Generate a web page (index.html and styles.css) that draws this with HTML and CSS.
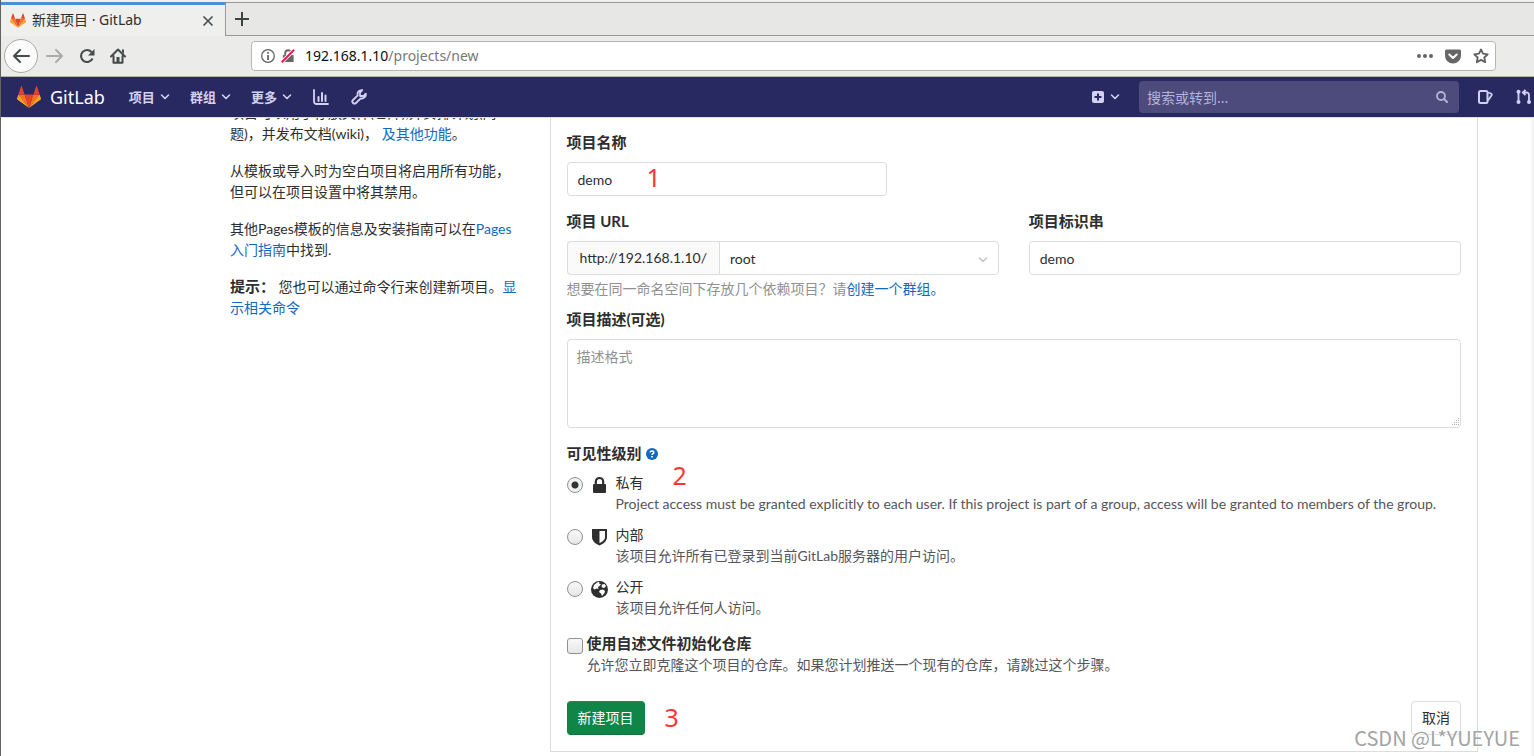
FILE: index.html
```
<!DOCTYPE html>
<html lang="zh-CN">
<head>
<meta charset="utf-8">
<title>新建项目 · GitLab</title>
<link rel="stylesheet" href="styles.css">
</head>
<body>
<svg class="defs" aria-hidden="true">
  <symbol id="tanuki" viewBox="0 0 24 22">
    <path fill="#e24329" d="M12 22 16.4 8.4H7.6z"/>
    <path fill="#fc6d26" d="M12 22 7.6 8.4H1.4zM12 22l4.4-13.6h6.2z"/>
    <path fill="#fca326" d="M1.4 8.4 0 12.5c-.1.4 0 .8.3 1L12 22zM22.6 8.4l1.4 4.1c.1.4 0 .8-.3 1L12 22z"/>
    <path fill="#e24329" d="M1.4 8.4h6.2L4.9.4c-.1-.5-.7-.5-.9 0zM22.6 8.4h-6.2L19.100.4c.1-.5.7-.5.9 0z"/>
  </symbol>
  <symbol id="chevron" viewBox="0 0 10 8">
    <path d="M1.500 2 5 5.500 8.500 2" fill="none" stroke="currentColor" stroke-width="1.600" stroke-linecap="round" stroke-linejoin="round"/>
  </symbol>
</svg>

<header class="chrome">
  <div class="tabs">
    <div class="tab">
      <svg class="favicon" viewBox="0 0 24 22"><use href="#tanuki"/></svg>
      <span class="tab-title">新建项目 · GitLab</span>
      <button class="plain" aria-label="关闭标签页"><svg width="12" height="12" viewBox="0 0 12 12"><path d="M1.500 1.500l9 9M10.500 1.500l-9 9" stroke="#4a4f50" stroke-width="1.700"/></svg></button>
    </div>
    <div class="tab-strip">
      <button class="plain" aria-label="新标签页"><svg width="14" height="14" viewBox="0 0 14 14"><path d="M7 0v14M0 7h14" stroke="#3e4344" stroke-width="2"/></svg></button>
    </div>
  </div>
  <div class="toolbar">
    <div class="nav-buttons">
      <button class="plain back" aria-label="后退"><svg width="18" height="16" viewBox="0 0 18 16"><path d="M8 2 2 8l6 6M2 8h15" fill="none" stroke="#454a4b" stroke-width="2" stroke-linecap="round" stroke-linejoin="round"/></svg></button>
      <button class="plain" aria-label="前进"><svg width="18" height="16" viewBox="0 0 18 16"><path d="M10 2l6 6-6 6M16 8H1" fill="none" stroke="#aaacab" stroke-width="2" stroke-linecap="round" stroke-linejoin="round"/></svg></button>
      <button class="plain" aria-label="刷新"><svg width="16" height="16" viewBox="0 0 16 16"><path d="M13.500 10.500A6 6 0 1 1 12.500 4" fill="none" stroke="#454a4b" stroke-width="2.100"/><path d="M15.500 1v6.500H9z" fill="#454a4b"/></svg></button>
      <button class="plain" aria-label="主页"><svg width="16" height="16" viewBox="0 0 16 16"><path d="M1 8.500 8 1.500l7 7M3.500 8v6.800h9V8" fill="none" stroke="#454a4b" stroke-width="2" stroke-linejoin="round" stroke-linecap="round"/><path d="M6.500 9h3v6h-3zM12 1.500h2V6l-2-2z" fill="#454a4b"/></svg></button>
    </div>
    <div class="address">
      <svg width="14" height="14" viewBox="0 0 14 14"><circle cx="7" cy="7" r="6.300" fill="none" stroke="#5c5c5c" stroke-width="1.200"/><path d="M6.200 3h1.700v1.700H6.200zM6.200 6h1.700v5H6.200z" fill="#5c5c5c"/></svg>
      <svg width="14" height="14" viewBox="0 0 15 15"><path d="M2 6.500h11.500V14H2z" fill="#666"/><path d="M4.500 7V4.500a3.200 3.200 0 0 1 6.400 0V7" fill="none" stroke="#666" stroke-width="2"/><path d="M.8 14.200 14 .8" stroke="#fff" stroke-width="4"/><path d="M.8 14.200 14 .8" stroke="#f0134d" stroke-width="2"/></svg>
      <span class="url">192.168.1.10<span class="path">/projects/new</span></span>
      <svg width="16" height="4" viewBox="0 0 16 4"><g fill="#666"><circle cx="2" cy="2" r="2"/><circle cx="8" cy="2" r="2"/><circle cx="14" cy="2" r="2"/></g></svg>
      <svg width="16" height="15" viewBox="0 0 16 15"><path d="M1.500.5h13A1.500 1.500 0 0 1 16 2v4.500a8 8 0 0 1-16 0V2A1.500 1.500 0 0 1 1.500.5z" fill="#666"/><path d="M4.300 5.500 8 9l3.700-3.500" fill="none" stroke="#fff" stroke-width="2" stroke-linecap="round" stroke-linejoin="round"/></svg>
      <svg width="16" height="16" viewBox="0 0 16 16"><path d="M8 1.500l2 4.200 4.700.6-3.400 3.200.9 4.700L8 11.900l-4.200 2.300.9-4.700L1.300 6.300 6 5.700z" fill="none" stroke="#606060" stroke-width="1.800" stroke-linejoin="round"/></svg>
    </div>
  </div>
</header>

<nav class="navbar">
  <a class="brand" href="#"><svg width="24" height="22"><use href="#tanuki"/></svg><span>GitLab</span></a>
  <button class="menu">项目<svg width="10" height="8"><use href="#chevron"/></svg></button>
  <button class="menu">群组<svg width="10" height="8"><use href="#chevron"/></svg></button>
  <button class="menu">更多<svg width="10" height="8"><use href="#chevron"/></svg></button>
  <a class="icon-link" href="#" aria-label="统计"><svg width="16" height="16" viewBox="0 0 16 16"><path d="M1 1v11.500A2.500 2.500 0 0 0 3.500 15H15" fill="none" stroke="currentColor" stroke-width="1.800" stroke-linecap="round"/><path d="M5.500 8v4M9 4v8M12.500 6.500V12" stroke="currentColor" stroke-width="2" stroke-linecap="round"/></svg></a>
  <a class="icon-link" href="#" aria-label="管理"><svg width="16" height="16" viewBox="0 0 16 16"><path d="M11.300 1.200 9 3.500v3.500h3.500L14.800 4.700A4 4 0 0 1 9.700 9.300L5 14a2.100 2.100 0 0 1-3-3l4.700-4.700a4 4 0 0 1 4.600-5.100z" fill="none" stroke="currentColor" stroke-width="1.800" stroke-linejoin="round"/></svg></a>
  <div class="nav-right">
    <button class="menu" aria-label="新建"><svg width="12" height="12" viewBox="0 0 12 12"><rect width="12" height="12" rx="2" fill="currentColor"/><path d="M6 2.500v7M2.500 6h7" stroke="#292961" stroke-width="2"/></svg><svg width="10" height="8"><use href="#chevron"/></svg></button>
    <div class="search">
      <input type="search" placeholder="搜索或转到..." aria-label="搜索或转到">
      <svg width="12" height="12" viewBox="0 0 12 12"><circle cx="5" cy="5" r="4" fill="none" stroke="currentColor" stroke-width="1.800"/><path d="m8 8 3 3" stroke="currentColor" stroke-width="2" stroke-linecap="round"/></svg>
    </div>
    <a class="icon-link" href="#" aria-label="议题"><svg width="16" height="14" viewBox="0 0 16 14"><path d="M2.500 1H8a1.500 1.500 0 0 1 1.500 1.500v9A1.500 1.500 0 0 1 8 13H2.500A1.500 1.500 0 0 1 1 11.500v-9A1.500 1.500 0 0 1 2.500 1z" fill="none" stroke="currentColor" stroke-width="2"/><path d="M10 2.500l3 1c.8.300 1 1 .6 1.700L10 10.500" fill="none" stroke="currentColor" stroke-width="1.800"/></svg></a>
    <a class="icon-link" href="#" aria-label="合并请求"><svg width="16" height="16" viewBox="0 0 16 16"><g fill="none" stroke="currentColor" stroke-width="1.800"><path d="M2.500 3v10M8 3.500h2.500a2.500 2.500 0 0 1 2.500 2.500v7M9.500.8 6.800 3.500l2.700 2.700"/></g><g fill="currentColor"><circle cx="2.500" cy="2.800" r="2"/><circle cx="2.500" cy="13" r="2"/><circle cx="13" cy="13" r="2"/></g></svg></a>
  </div>
</nav>

<main class="viewport">
  <div class="row">
    <aside class="intro">
      <p>项目可以用于存放文件(仓库),并安排计划(问题)，并发布文档(wiki)， <a href="#">及其他功能</a>。</p>
      <p>从模板或导入时为空白项目将启用所有功能，但可以在项目设置中将其禁用。</p>
      <p>其他Pages模板的信息及安装指南可以在<a href="#">Pages入门指南</a>中找到.</p>
      <p><strong>提示：</strong> 您也可以通过命令行来创建新项目。<a href="#">显示相关命令</a></p>
    </aside>
    <div class="form-col">
      <form class="panel">
        <div class="group name-group">
          <label for="name">项目名称</label>
          <input class="control" id="name" type="text" value="demo">
          <span class="mark mark-one">1</span>
        </div>
        <div class="pair">
          <div>
            <label for="namespace">项目 URL</label>
            <div class="input-group">
              <span class="prefix">http://192.168.1.10/</span>
              <div class="select-wrap">
                <select class="control" id="namespace"><option>root</option></select>
                <svg width="10" height="8"><use href="#chevron"/></svg>
              </div>
            </div>
          </div>
          <div>
            <label for="slug">项目标识串</label>
            <input class="control" id="slug" type="text" value="demo">
          </div>
        </div>
        <p class="help">想要在同一命名空间下存放几个依赖项目？请<a href="#">创建一个群组。</a></p>
        <div class="group">
          <label for="desc">项目描述(可选)</label>
          <div class="area-wrap">
            <textarea class="control" id="desc" placeholder="描述格式"></textarea>
            <svg width="10" height="10" viewBox="0 0 10 10"><path d="M8 1.500h1M6 3.500h1M8 3.500h1M4 5.500h1M6 5.500h1M8 5.500h1M2 7.500h1M4 7.500h1M6 7.500h1M8 7.500h1" stroke="#b5b5b5"/></svg>
          </div>
        </div>
        <fieldset>
          <legend>可见性级别 <a href="#" aria-label="帮助"><svg width="12" height="12" viewBox="0 0 12 12"><circle cx="6" cy="6" r="6" fill="#1068bf"/><path d="M4.200 4.600C4.200 2.400 7.800 2.500 7.800 4.500 7.800 5.700 6.100 5.700 6.100 7" fill="none" stroke="#fff" stroke-width="1.600"/><path d="M5.200 8h1.700v1.600H5.200z" fill="#fff"/></svg></a><span class="mark mark-two">2</span></legend>
          <div class="option">
            <input type="radio" name="visibility" id="private" checked>
            <svg width="18" height="18" viewBox="0 0 18 18"><rect x="3" y="8" width="13" height="9" rx="1" fill="#2e2e2e"/><path d="M5.800 8.500V5.700a3.700 3.700 0 0 1 7.400 0v2.800" fill="none" stroke="#2e2e2e" stroke-width="2.200"/></svg>
            <div><label for="private">私有</label><p>Project access must be granted explicitly to each user. If this project is part of a group, access will be granted to members of the group.</p></div>
          </div>
          <div class="option">
            <input type="radio" name="visibility" id="internal">
            <svg width="18" height="18" viewBox="0 0 18 18"><path d="M2 1h15v8c0 4-3.500 7-7.500 8.500C5.500 16 2 13 2 9z" fill="#2e2e2e"/><path d="M9.500 3H15v6c0 2.600-2.500 4.900-5.500 6z" fill="#fff"/></svg>
            <div><label for="internal">内部</label><p>该项目允许所有已登录到当前GitLab服务器的用户访问。</p></div>
          </div>
          <div class="option">
            <input type="radio" name="visibility" id="public">
            <svg width="18" height="18" viewBox="0 0 18 18"><circle cx="9.500" cy="9.500" r="8.500" fill="#2e2e2e"/><path d="M4 5l3.500-2.800L9.500 2 9 3.500l2 .8L9.500 6 8 7.200 8.500 9 6.500 8.500 4.500 9.500 3 8zM12 4.500l2.500-.5 1.500 2-1 1.500-2 .5-1.500-1.500zM10 10l3-.5 2 1.500-.5 2-2.500 3-1-2.500L9 12z" fill="#fff"/></svg>
            <div><label for="public">公开</label><p>该项目允许任何人访问。</p></div>
          </div>
        </fieldset>
        <div class="readme">
          <input type="checkbox" id="readme">
          <div><label for="readme">使用自述文件初始化仓库</label><p>允许您立即克隆这个项目的仓库。如果您计划推送一个现有的仓库，请跳过这个步骤。</p></div>
        </div>
        <div class="actions">
          <button class="btn btn-create" type="submit">新建项目</button>
          <button class="btn btn-cancel" type="button">取消</button>
          <span class="mark mark-three">3</span>
        </div>
      </form>
    </div>
  </div>
</main>
<div class="watermark">CSDN @L*YUEYUE</div>
</body>
</html>
```
FILE: styles.css
```
* { box-sizing: border-box; }

body {
  margin: 0;
  height: 100vh;
  display: flex;
  flex-direction: column;
  overflow: hidden;
  position: relative;
  border-left: 1px solid #626262;
  background: #fff;
  color: #2e2e2e;
  font: 14px/21px "Noto Sans", "Noto Sans CJK SC", sans-serif;
}

p { margin: 0; }
a { color: #1068bf; text-decoration: none; }
button, input, select, textarea { font: inherit; color: inherit; }
svg { display: block; flex: none; }
.defs { position: absolute; width: 0; height: 0; }

.plain {
  display: flex;
  align-items: center;
  justify-content: center;
  padding: 0;
  border: 0;
  background: none;
}

/* Browser window */
.chrome { flex: none; background: #ebebe9; border-bottom: 1px solid #b4b4ac; }
.tabs { display: flex; height: 36px; padding-top: 2px; background: #efefed; }
.tab {
  display: flex;
  align-items: center;
  width: 225px;
  padding: 0 11px 0 9px;
  border-top: 3px solid #4a90d9;
  border-right: 1px solid #989994;
}
.favicon { width: 16px; height: 15px; margin-right: 6px; }
.tab-title { flex: 1; padding-bottom: 2px; }
.tab-strip {
  flex: 1;
  display: flex;
  align-items: center;
  padding-left: 9px;
  background: #e7e7e5;
  border-top: 1px solid #989994;
  border-bottom: 1px solid #989994;
}
.toolbar { display: flex; align-items: center; height: 40px; padding: 0 38px 0 3px; }
.nav-buttons { display: flex; align-items: center; gap: 15px; width: 247px; }
.back {
  width: 34px;
  height: 34px;
  margin-right: -7px;
  border: 1px solid #a9aaa6;
  border-radius: 50%;
  background: #fbfbfb;
}
.address {
  flex: 1;
  display: flex;
  align-items: center;
  gap: 12px;
  height: 30px;
  padding: 0 6px 0 9px;
  background: #fff;
  border: 1px solid #b6b6b3;
  border-radius: 4px;
}
.address svg:first-child { margin-right: -6px; }
.url { flex: 1; margin-left: -2px; padding-bottom: 2px; color: #0c0c0c; }
.path { color: #777; }

/* GitLab navigation */
.navbar {
  flex: none;
  display: flex;
  align-items: center;
  height: 41px;
  padding-left: 16px;
  background: #292961;
  color: #d1d1f0;
  border-bottom: 1px solid #dfdfe6;
}
.brand { display: flex; align-items: center; gap: 9px; margin-right: 14px; color: #fff; font-size: 18px; }
.menu {
  display: flex;
  align-items: center;
  gap: 5px;
  padding: 0;
  margin: 0 10px;
  border: 0;
  background: none;
  font-size: 13px;
  font-weight: 700;
}
.icon-link { margin: 0 11px; color: inherit; }
.nav-right { display: flex; align-items: center; margin-left: auto; margin-right: -9px; }
.nav-right .menu { gap: 6px; }
.search {
  display: flex;
  align-items: center;
  width: 320px;
  height: 32px;
  margin: 0 8px 0 9px;
  padding: 0 11px 0 8px;
  border-radius: 4px;
  background: #4c4b7c;
  color: #b5b4d6;
}
.search input { flex: 1; min-width: 0; padding: 0; border: 0; background: none; outline: 0; }
.search input::placeholder { color: #b5b4d6; }

/* New project page */
.viewport {
  flex: 1;
  min-height: 0;
  overflow: hidden;
  box-shadow: inset -4px 0 3px -2px #eee;
  font-family: Lato, "Noto Sans CJK SC", sans-serif;
}
.row { display: flex; margin: 0 41px 0 214px; }
.intro { width: 25%; padding: 0 15px; margin-top: -16px; }
.intro p { margin-bottom: 16px; }
.intro strong { font-size: 15px; line-height: 20px; }
.form-col { width: 75%; padding: 0 15px; }
.panel { padding: 14px 16px 16px; border: 1px solid #dcdcdc; border-top: 0; }

label, legend { display: block; margin-bottom: 9px; padding: 0; font-size: 15px; font-weight: 700; line-height: 21px; }
.control {
  display: block;
  width: 100%;
  height: 34px;
  margin: 0;
  padding: 0 10px;
  border: 1px solid #dcdcdc;
  border-radius: 4px;
  background: #fff;
  outline: 0;
}
.group { position: relative; }
.name-group { margin-bottom: 15px; }
.name-group .control { width: 320px; }
.pair { display: grid; grid-template-columns: 1fr 1fr; gap: 30px; }
.input-group { display: flex; }
.prefix {
  height: 34px;
  padding: 0 12px;
  line-height: 32px;
  border: 1px solid #dcdcdc;
  border-right: 0;
  border-radius: 4px 0 0 4px;
  background: #fafafa;
}
.select-wrap { flex: 1; position: relative; }
.select-wrap .control { appearance: none; border-radius: 0 4px 4px 0; }
.select-wrap svg { position: absolute; right: 11px; top: 15px; color: #c4c4c4; pointer-events: none; }
.help { margin: 3px 0 10px; color: #919191; }
.area-wrap { position: relative; }
.area-wrap .control { height: 89px; padding: 6px 9px; resize: none; }
.area-wrap .control::placeholder { color: #919191; }
.area-wrap svg { position: absolute; right: 1px; bottom: 1px; }

fieldset { margin: 15px 0 0; padding: 0; border: 0; }
legend { position: relative; display: flex; align-items: center; gap: 4px; margin-bottom: 8px; }
.option { display: flex; margin-bottom: 10px; }
.option > svg { margin: 4px 8px 0 7px; }
.option label { margin: 0; font-size: 14px; font-weight: 400; }
.option p, .readme p { color: #55555c; }
[type="radio"], [type="checkbox"] {
  appearance: none;
  flex: none;
  width: 16px;
  height: 16px;
  margin: 5px 0 0;
  border: 1px solid #92928e;
  background: linear-gradient(#f8f8f8, #e6e6e6);
}
[type="radio"] { border-radius: 50%; }
[type="radio"]:checked { background: radial-gradient(circle, #2e3436 3px, #f1f1f1 4px); }
[type="checkbox"] { border-radius: 3px; }
.readme { display: flex; gap: 4px; margin-top: 5px; }
.readme label { margin: 0; }
.actions { position: relative; display: flex; justify-content: space-between; margin-top: 26px; }
.btn { height: 34px; padding: 0 10px 2px; border: 1px solid #dcdcdc; border-radius: 4px; background: #fff; }
.btn-create { border-color: #168f48 #12803d #0e753a; background: #108548; color: #fff; }

/* Red step numbers and the corner watermark */
.mark { position: absolute; color: #ff3535; font-size: 25px; line-height: 30px; font-weight: 400; font-family: "Noto Sans", sans-serif; }
.mark-one { left: 80px; top: 30px; }
.mark-two { left: 106px; top: 17px; }
.mark-three { left: 98px; top: 1px; }
.watermark {
  position: absolute;
  right: 14px;
  bottom: 4px;
  color: #a3a3a3;
  font: 20px/28px "Noto Sans CJK SC", sans-serif;
  text-shadow: 1px 1px 1px #fff;
}
```
